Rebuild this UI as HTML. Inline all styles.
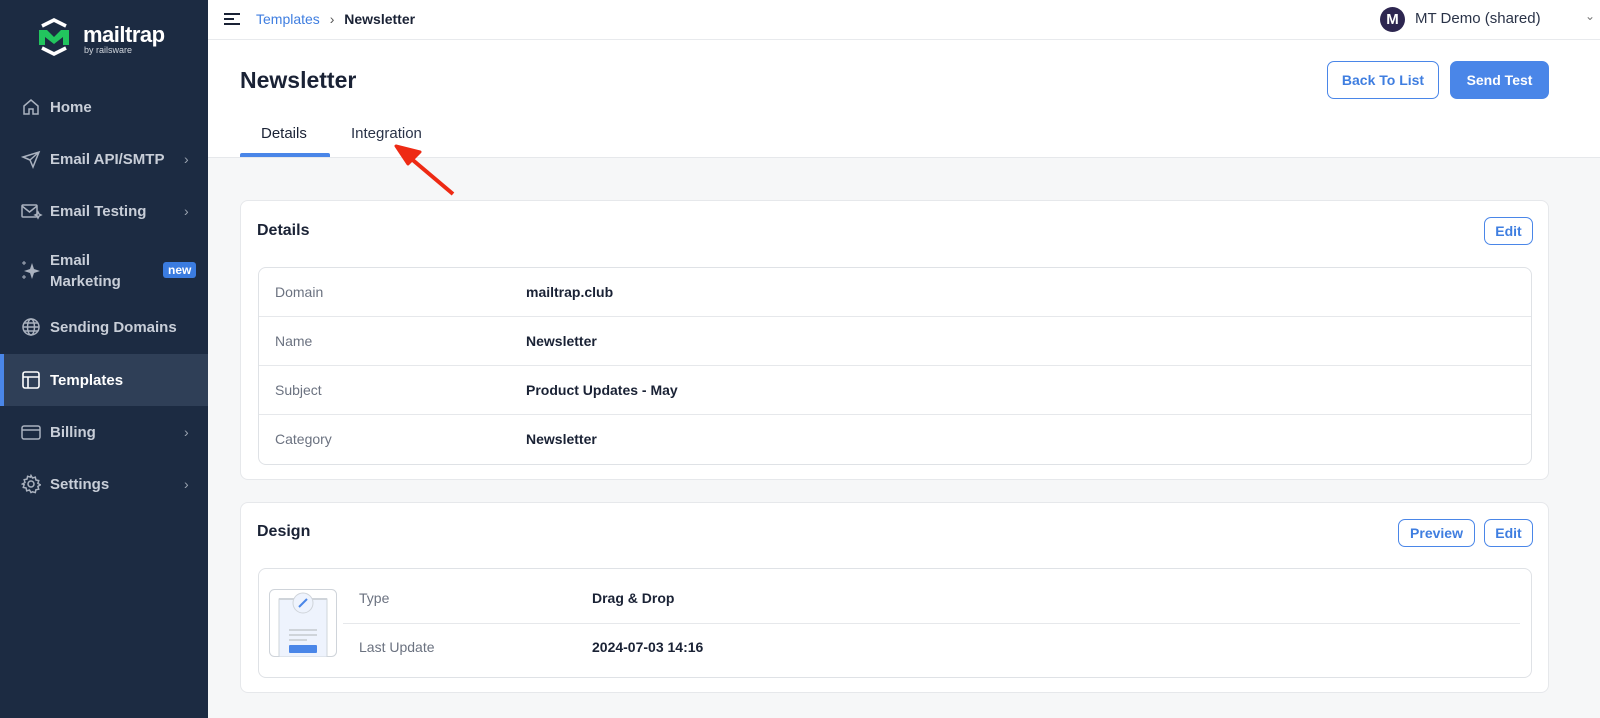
<!DOCTYPE html>
<html><head><meta charset="utf-8"><style>
*{box-sizing:border-box;margin:0;padding:0}
body{width:1600px;height:718px;overflow:hidden;font-family:"Liberation Sans",sans-serif;background:#f6f7f8;position:relative;color:#1a2235}
.sb{position:absolute;left:0;top:0;width:208px;height:718px;background:#1c2b42}
.nav{position:absolute;left:0;width:208px;height:52px;display:flex;align-items:center;color:#c8ced8;font-size:15px;font-weight:bold}
.nav svg{position:absolute;left:21px}
.nav span{position:absolute;left:50px}
.chev{position:absolute;left:184px;color:#9aa3b0;font-size:14px;font-weight:normal}
.top{position:absolute;left:208px;top:0;right:0;height:40px;background:#fff;border-bottom:1px solid #e8eaed}
.hdr{position:absolute;left:208px;top:40px;right:0;height:118px;background:#fff;border-bottom:1px solid #e6e8eb}
.card{position:absolute;left:240px;width:1309px;background:#fff;border:1px solid #e6e8eb;border-radius:8px}
.inner{position:absolute;left:17px;right:16px;border:1px solid #dfe2e6;border-radius:8px}
.row{position:absolute;left:0;right:0;height:49px;border-bottom:1px solid #e6e8eb;font-size:14px}
.row .k{position:absolute;left:16px;top:16px;color:#6b7280}
.row .v{position:absolute;left:267px;top:16px;font-weight:bold;color:#1a2235}
.btn{position:absolute;height:28px;border:1px solid #4a86e8;border-radius:7px;color:#3f7ee0;font-weight:bold;font-size:14px;display:flex;align-items:center;justify-content:center;background:#fff}
</style></head><body>
<div class="sb">
 <svg style="position:absolute;left:36px;top:18px" width="36" height="38" viewBox="0 0 36 38"><path d="M6 8 L18 2 L30 8" fill="none" stroke="#fff" stroke-width="3.5"/><path d="M6 30 L18 36 L30 30" fill="none" stroke="#fff" stroke-width="3.5"/><path d="M3 12 H11 L18 19 L25 12 H33 V27 H27 V19 L18 26 L9 19 V27 H3 Z" fill="#22c55e"/></svg>
 <div style="position:absolute;left:83px;top:22px;color:#fff;font-size:22px;font-weight:bold;letter-spacing:-0.5px">mailtrap</div>
 <div style="position:absolute;left:84px;top:45px;color:#d0d5dc;font-size:9px">by railsware</div>
 <div class="nav" style="top:81px"><svg width="20" height="20" viewBox="0 0 20 20" fill="none" stroke="#aab2bf" stroke-width="1.5"><path d="M3 9 L10 3 L17 9 V17 H12 V12 H8 V17 H3 Z"/></svg><span>Home</span></div>
 <div class="nav" style="top:133px"><svg width="20" height="20" viewBox="0 0 20 20" fill="none" stroke="#aab2bf" stroke-width="1.5"><path d="M2 8 L18 3 L12 18 L9 11 Z M9 11 L18 3"/></svg><span>Email API/SMTP</span><b class="chev">›</b></div>
 <div class="nav" style="top:185px"><svg width="22" height="20" viewBox="0 0 22 20" fill="none" stroke="#aab2bf" stroke-width="1.5"><rect x="1" y="4" width="15" height="12" rx="1"/><path d="M1 5 L8.5 11 L16 5"/><path d="M17 11 L18 13 L20 14 L18 15 L17 17 L16 15 L14 14 L16 13Z"/></svg><span>Email Testing</span><b class="chev">›</b></div>
 <div class="nav" style="top:244px;height:52px"><svg width="20" height="20" viewBox="0 0 20 20" fill="#aab2bf"><path d="M11 3 L13 9 L19 11 L13 13 L11 19 L9 13 L3 11 L9 9Z"/><path d="M3 1v4M1 3h4M3 15v4M1 17h4" stroke="#aab2bf" stroke-width="1"/></svg><span style="top:6px;line-height:21px">Email<br>Marketing</span><b style="position:absolute;left:163px;top:18px;background:#3b7ce0;color:#fff;font-size:12px;padding:1px 5px;border-radius:3px">new</b></div>
 <div class="nav" style="top:301px"><svg width="20" height="20" viewBox="0 0 20 20" fill="none" stroke="#aab2bf" stroke-width="1.5"><circle cx="10" cy="10" r="8"/><ellipse cx="10" cy="10" rx="3.5" ry="8"/><path d="M2 10h16M3.5 6h13M3.5 14h13"/></svg><span>Sending Domains</span></div>
 <div class="nav" style="top:354px;background:#2f3f57;color:#fff"><div style="position:absolute;left:0;top:0;width:4px;height:52px;background:#4a86e8"></div><svg width="20" height="20" viewBox="0 0 20 20" fill="none" stroke="#fff" stroke-width="1.6"><rect x="2" y="2" width="16" height="16" rx="2"/><path d="M2 7h16M7 7v11"/></svg><span>Templates</span></div>
 <div class="nav" style="top:406px"><svg width="20" height="20" viewBox="0 0 20 20" fill="none" stroke="#aab2bf" stroke-width="1.5"><rect x="1" y="4" width="18" height="13" rx="2"/><path d="M1 8h18"/></svg><span>Billing</span><b class="chev">›</b></div>
 <div class="nav" style="top:458px"><svg width="20" height="20" viewBox="0 0 20 20" fill="none" stroke="#aab2bf" stroke-width="1.5"><circle cx="10" cy="10" r="3"/><path d="M10 1.5l1.5 2.5 2.8-.8.6 2.8 2.8.6-.8 2.8 2.5 1.5-2.5 1.5.8 2.8-2.8.6-.6 2.8-2.8-.8L10 18.5l-1.5-2.5-2.8.8-.6-2.8-2.8-.6.8-2.8L1.5 10 4 8.5l-.8-2.8 2.8-.6.6-2.8 2.8.8z"/></svg><span>Settings</span><b class="chev">›</b></div>
</div>
<div class="top">
 <svg style="position:absolute;left:16px;top:12px" width="16" height="14" viewBox="0 0 16 14" stroke="#1a2235" stroke-width="2"><path d="M0 2h16M0 7h10M0 12h16"/></svg>
 <div style="position:absolute;left:48px;top:11px;font-size:14px"><span style="color:#3f7ee0">Templates</span> <span style="color:#555;margin:0 6px">›</span> <b>Newsletter</b></div>
 <div style="position:absolute;left:1172px;top:7px;width:25px;height:25px;border-radius:50%;background:#2d2650;color:#fff;font-weight:bold;font-size:15px;text-align:center;line-height:25px">M</div>
 <div style="position:absolute;left:1207px;top:10px;font-size:15px;color:#2a3348">MT Demo (shared)</div>
 <div style="position:absolute;left:1377px;top:9px;font-size:12px;color:#777">⌄</div>
</div>
<div class="hdr">
 <div style="position:absolute;left:32px;top:27px;font-size:23px;font-weight:bold">Newsletter</div>
 <div class="btn" style="left:1119px;top:21px;width:112px;height:38px">Back To List</div>
 <div class="btn" style="left:1242px;top:21px;width:99px;height:38px;background:#4a86e8;color:#fff;border-color:#4a86e8">Send Test</div>
 <div style="position:absolute;left:53px;top:85px;font-size:15px">Details</div>
 <div style="position:absolute;left:32px;top:113px;width:90px;height:4px;background:#4a86e8;border-radius:2px 2px 0 0"></div>
 <div style="position:absolute;left:143px;top:85px;font-size:15px;color:#2a3348">Integration</div>
</div>
<svg style="position:absolute;left:0;top:0" width="1600" height="718"><path d="M453 194 L408 156" stroke="#ee2a14" stroke-width="4"/><path d="M396 146 L420 152 L408 164Z" fill="#ee2a14" stroke="#ee2a14" stroke-width="3" stroke-linejoin="round"/></svg>
<div class="card" style="top:200px;height:280px">
 <div style="position:absolute;left:16px;top:21px;font-size:16px;font-weight:bold">Details</div>
 <div class="btn" style="left:1243px;top:16px;width:49px">Edit</div>
 <div class="inner" style="top:66px;height:198px">
  <div class="row" style="top:0"><span class="k">Domain</span><span class="v">mailtrap.club</span></div>
  <div class="row" style="top:49px"><span class="k">Name</span><span class="v">Newsletter</span></div>
  <div class="row" style="top:98px"><span class="k">Subject</span><span class="v">Product Updates - May</span></div>
  <div class="row" style="top:147px;border:none"><span class="k">Category</span><span class="v">Newsletter</span></div>
 </div>
</div>
<div class="card" style="top:502px;height:191px">
 <div style="position:absolute;left:16px;top:20px;font-size:16px;font-weight:bold">Design</div>
 <div class="btn" style="left:1157px;top:16px;width:77px">Preview</div>
 <div class="btn" style="left:1243px;top:16px;width:49px">Edit</div>
 <div class="inner" style="top:65px;height:110px">
  <svg style="position:absolute;left:10px;top:20px" width="68" height="68" viewBox="0 0 68 68"><rect x="0.5" y="0.5" width="67" height="67" rx="5" fill="#fff" stroke="#cfd4da"/><rect x="10" y="10" width="48" height="58" fill="#eef3fd" stroke="#cfd4da"/><path d="M10 10h48" stroke="#cfd4da" stroke-width="2"/><circle cx="34" cy="14" r="10" fill="#eef3fd" stroke="#cfd4da"/><path d="M30 18 L38 10" stroke="#4a86e8" stroke-width="2"/><rect x="20" y="40" width="28" height="2" fill="#cfd4da"/><rect x="20" y="45" width="28" height="2" fill="#cfd4da"/><rect x="20" y="50" width="18" height="2" fill="#cfd4da"/><rect x="20" y="56" width="28" height="8" rx="1" fill="#4a86e8"/></svg>
  <div class="row" style="left:84px;right:11px;top:0;height:55px"><span class="k" style="left:16px;top:21px">Type</span><span class="v" style="left:249px;top:21px">Drag &amp; Drop</span></div>
  <div class="row" style="left:84px;right:11px;top:55px;border:none"><span class="k" style="left:16px;top:15px">Last Update</span><span class="v" style="left:249px;top:15px">2024-07-03 14:16</span></div>
 </div>
</div>
</body></html>
